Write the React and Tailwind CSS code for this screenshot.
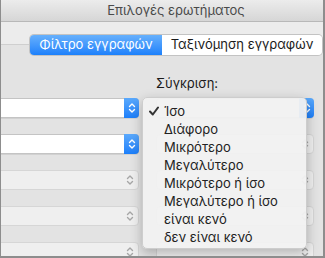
import React from "react";

const font = { fontFamily: "Inter, 'Noto Sans', sans-serif" };

const items = [
    "Ίσο",
    "Διάφορο",
    "Μικρότερο",
    "Μεγαλύτερο",
    "Μικρότερο ή ίσο",
    "Μεγαλύτερο ή ίσο",
    "είναι κενό",
    "δεν είναι κενό",
];

const Chevrons = ({color}) => (
    <svg width="8" height="12" viewBox="0 0 8 12" fill="none" stroke={color} strokeWidth="1.4" strokeLinecap="round" strokeLinejoin="round">
        <path d="M1.5 4.5 L4 2 L6.5 4.5"/>
        <path d="M1.5 7.5 L4 10 L6.5 7.5"/>
    </svg>
);

const ActiveSelect = ({className = ""}) => (
    <div className={`flex h-[20px] rounded-[4px] bg-white border border-[#c4c4c4] shadow-[0_1px_0_rgba(0,0,0,0.08)] ${className}`}>
        <div className="flex-1"/>
        <div className="w-[15px] -my-px -mr-px flex items-center justify-center rounded-r-[4px] bg-gradient-to-b from-[#5aa9fc] to-[#1b7ffa]">
            <Chevrons color="#ffffff"/>
        </div>
    </div>
);

const DisabledSelect = ({className = ""}) => (
    <div className={`flex h-[20px] items-center justify-end pr-[4px] rounded-[4px] bg-[#efefef] border border-[#d6d6d6] ${className}`}>
        <Chevrons color="#a6a6a6"/>
    </div>
);

const App = () => {
    return (
        <div
            className="relative w-[325px] h-[258px] overflow-hidden bg-[#e3e3e3] border-l border-r-2 border-b-2 border-[#8d8d8d] text-[13px]"
            style={font}
        >
            {/* title bar */}
            <div className="h-[22px] flex items-center justify-center pl-[28px] bg-gradient-to-b from-[#ececec] to-[#d6d6d6] border-b border-[#b8b8b8] text-[#4a4a4a]">
                Επιλογές ερωτήματος
            </div>

            {/* toolbar strip + tabs */}
            <div className="h-[23px] bg-[#ececec] border-b border-[#cfcfcf]"/>
            <div className="-mt-[10px] pl-[29px] flex">
                <div className="flex h-[20px] rounded-[4px] shadow-[0_0_0_1px_#c3c3c3]">
                    <div className="w-[132px] flex items-center justify-center rounded-l-[4px] bg-gradient-to-b from-[#66b0fc] to-[#1b80fb] text-white">
                        Φίλτρο εγγραφών
                    </div>
                    <div className="w-[160px] flex items-center justify-center rounded-r-[4px] bg-white text-[#1a1a1a]">
                        Ταξινόμηση εγγραφών
                    </div>
                </div>
            </div>

            {/* filter rows */}
            <div className="grid grid-cols-[148px_158px] gap-x-[17px] -ml-[10px] mt-[19px]">
                <div/>
                <div className="h-[24px] text-[#1a1a1a] leading-[18px]">Σύγκριση:</div>
                <div className="col-span-2 grid grid-cols-[148px_158px] gap-x-[17px] gap-y-[16px]">
                    <ActiveSelect className="rounded-l-none border-l-0"/>
                    <ActiveSelect/>
                    <ActiveSelect className="rounded-l-none border-l-0"/>
                    <DisabledSelect/>
                    <DisabledSelect/>
                    <DisabledSelect/>
                    <DisabledSelect/>
                    <DisabledSelect/>
                    <DisabledSelect/>
                    <DisabledSelect/>
                </div>
            </div>

            {/* open popup menu */}
            <div className="absolute left-[141px] top-[97px] w-[165px] h-[152px] rounded-[5px] bg-[#f1f1f1]/95 border border-[#cdcdcd] shadow-[0_4px_12px_rgba(0,0,0,0.25)] pt-[4px] text-[#222222]">
                {items.map((label, i) => (
                    <div key={label} className="relative h-[18px] leading-[18px] pl-[21px]">
                        {i === 0 && (
                            <svg className="absolute left-[6px] top-[4px]" width="10" height="10" viewBox="0 0 10 10" fill="none" stroke="#333333" strokeWidth="2" strokeLinecap="round" strokeLinejoin="round">
                                <path d="M1 5.5 L3.8 8.5 L9 1.5"/>
                            </svg>
                        )}
                        {label}
                    </div>
                ))}
            </div>
        </div>
    );
};

export default App;
